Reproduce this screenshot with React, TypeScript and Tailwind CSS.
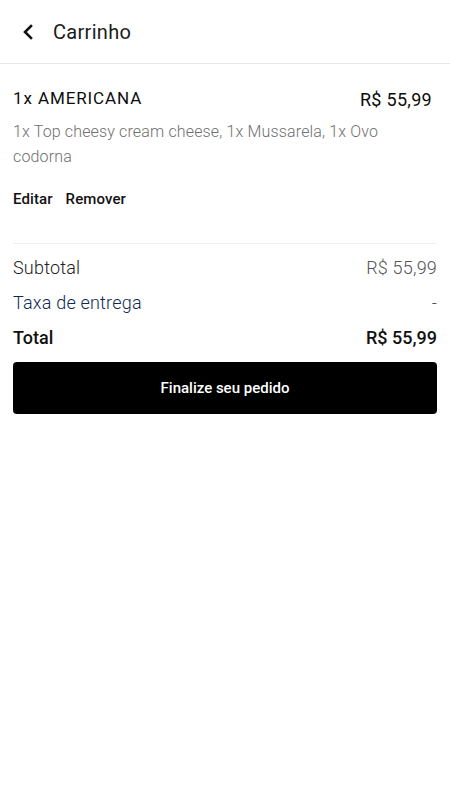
import React from 'react';

export default function App() {
  return (
    <div className="w-[450px] min-h-[800px] bg-white font-['Roboto',sans-serif] text-[#111]">
      <div className="h-[64px] flex items-center px-[20px] border-b border-[#e8e8e8]">
        <svg width="14" height="16" viewBox="0 0 14 16" className="ml-[1px]">
          <path d="M10 2 L4 8 L10 14" fill="none" stroke="#111" strokeWidth="2.6" strokeLinecap="square" />
        </svg>
        <span className="ml-[18px] text-[20px] leading-[24px] tracking-[0.3px] text-[#1b1b1b]">Carrinho</span>
      </div>

      <div className="px-[13px]">
        <div className="mt-[23px] flex justify-between items-center h-[24px] text-[#0d0d0d]">
          <span className="text-[17px] font-normal tracking-[0.9px]">1x AMERICANA</span>
          <span className="text-[18px] font-normal tracking-[0.3px] mr-[5px]">R$ 55,99</span>
        </div>
        <p className="mt-[8px] text-[16px] leading-[25px] font-light tracking-[0.15px] text-[#6f6f6f] pr-[20px]">
          1x Top cheesy cream cheese, 1x Mussarela, 1x Ovo codorna
        </p>
        <div className="mt-[20px] flex gap-[13px] text-[15px] leading-[20px] font-medium tracking-[0.1px]">
          <span>Editar</span>
          <span>Remover</span>
        </div>

        <div className="mt-[34px] h-[1px] bg-[#efefef]" />

        <div className="mt-[11px] flex flex-col gap-[11px]">
          <div className="flex justify-between items-center h-[24px] text-[18px] font-light tracking-[0.2px]">
            <span className="text-[#222]">Subtotal</span>
            <span className="text-[#555]">R$ 55,99</span>
          </div>
          <div className="flex justify-between items-center h-[24px] text-[18px] font-light tracking-[0.2px]">
            <span className="text-[#0f2a52]">Taxa de entrega</span>
            <span className="text-[#555]">-</span>
          </div>
          <div className="flex justify-between items-center h-[24px] text-[18px] font-medium">
            <span>Total</span>
            <span>R$ 55,99</span>
          </div>
        </div>

        <button className="mt-[13px] w-full h-[52px] bg-black rounded-[4px] text-white text-[15px] font-medium">
          Finalize seu pedido
        </button>
      </div>
    </div>
  );
}
